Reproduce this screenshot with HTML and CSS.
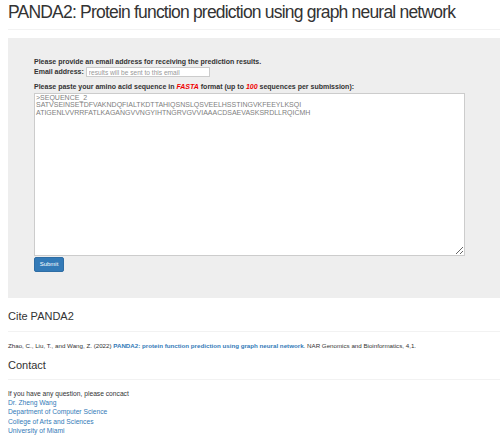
FILE: index.html
```html
<!DOCTYPE html>
<html>
<head>
<meta charset="utf-8">
<link rel="stylesheet" href="styles.css">
</head>
<body>
<div class="page">
  <h1 class="title">PANDA2: Protein function prediction using graph neural network</h1>
  <hr class="rule rule-top">
  <div class="jumbo">
    <form class="form">
      <label class="lbl">Please provide an email address for receiving the prediction results.</label>
      <div class="email-row">
        <label class="lbl">Email address:</label>
        <input class="email" type="text" placeholder="results will be sent to this email">
      </div>
      <label class="lbl lbl-seq">Please paste your amino acid sequence in <em class="red">FASTA</em> format (up to <em class="red">100</em> sequences per submission):</label>
      <textarea class="seq">&gt;SEQUENCE_2
SATVSEINSETDFVAKNDQFIALTKDTTAHIQSNSLQSVEELHSSTINGVKFEEYLKSQI
ATIGENLVVRRFATLKAGANGVVNGYIHTNGRVGVVIAAACDSAEVASKSRDLLRQICMH</textarea>
      <button class="btn" type="button">Submit</button>
    </form>
  </div>
  <h3 class="sec sec-cite">Cite PANDA2</h3>
  <hr class="rule">
  <p class="cite">Zhao, C., Liu, T., and Wang, Z. (2022) <a class="link strong" href="#">PANDA2: protein function prediction using graph neural network</a>. NAR Genomics and Bioinformatics, 4,1.</p>
  <h3 class="sec sec-contact">Contact</h3>
  <hr class="rule">
  <div class="contact">
    <div>If you have any question, please concact</div>
    <a class="link" href="#">Dr. Zheng Wang</a>
    <a class="link" href="#">Department of Computer Science</a>
    <a class="link" href="#">College of Arts and Sciences</a>
    <a class="link" href="#">University of Miami</a>
  </div>
</div>
</body>
</html>
```
FILE: styles.css
```css
html, body {
  margin: 0;
  padding: 0;
  background: #fff;
}
body {
  font-family: "Liberation Sans", Arial, sans-serif;
  font-size: 6.4px;
  line-height: 9.2px;
  color: #333;
}
.page {
  padding: 0 0 0 8px;
}
.title {
  margin: 0;
  padding-top: 2px;
  font-size: 17.5px;
  line-height: 21px;
  letter-spacing: -0.8px;
  font-weight: normal;
  white-space: nowrap;
  color: #333;
}
.rule {
  margin: 0;
  border: 0;
  border-top: 1px solid #f2f2f2;
}
.rule-top {
  margin-top: 6px;
}
.jumbo {
  margin-top: 8px;
  background: #eee;
  padding: 20px 0 26px 26px;
}
.form {
  display: flex;
  flex-direction: column;
  align-items: flex-start;
  margin: 0;
}
.lbl {
  display: block;
  font-size: 7px;
  font-weight: bold;
  line-height: 8px;
  color: #333;
}
.email-row {
  display: flex;
  align-items: center;
  gap: 2px;
  height: 12px;
}
.email {
  box-sizing: border-box;
  width: 124px;
  height: 10px;
  margin: 0;
  padding: 0 2px;
  border: 1px solid #ccc;
  background: #fff;
  font-family: "Liberation Sans", Arial, sans-serif;
  font-size: 6.6px;
  color: #555;
}
.email::placeholder {
  color: #999;
}
.lbl-seq {
  margin-top: 5px;
}
.red {
  color: #e00;
  font-style: italic;
}
.seq {
  box-sizing: border-box;
  width: 431px;
  height: 163px;
  margin: 1.5px 0 0 0;
  padding: 0 1px;
  border: 1px solid #ccc;
  background: #fff;
  font-family: "Liberation Sans", Arial, sans-serif;
  font-size: 7px;
  line-height: 7.5px;
  color: #808080;
  resize: both;
}
.btn {
  margin-top: 1px;
  width: 30px;
  height: 15px;
  padding: 0;
  border: 1px solid #2e6da4;
  border-radius: 2px;
  background: #337ab7;
  color: #fff;
  font-family: "Liberation Sans", Arial, sans-serif;
  font-size: 6px;
}
.sec {
  margin: 0;
  font-size: 11px;
  line-height: 12px;
  font-weight: normal;
  color: #333;
}
.sec-cite {
  margin-top: 12px;
  margin-bottom: 9px;
}
.cite {
  margin: 9px 0 0 0;
  font-size: 6.2px;
  line-height: 9px;
}
.link {
  color: #337ab7;
  text-decoration: none;
}
.strong {
  font-weight: bold;
}
.sec-contact {
  margin-top: 9px;
  margin-bottom: 8px;
}
.contact {
  margin-top: 9px;
  display: flex;
  flex-direction: column;
  font-size: 6.7px;
  line-height: 9.4px;
}
```
